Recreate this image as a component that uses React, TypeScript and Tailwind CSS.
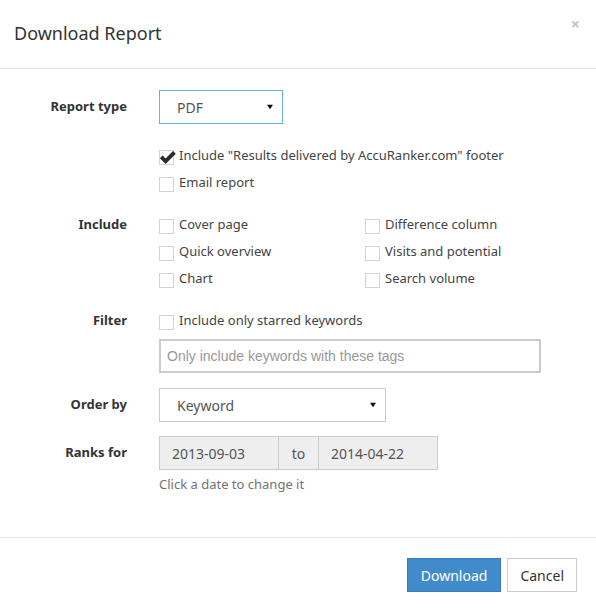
import React from "react";

const font = { fontFamily: '"Noto Sans", "Open Sans", sans-serif' };

function Box({ checked = false }: { checked?: boolean }) {
  return (
    <span className="relative inline-block w-[15px] h-[15px] border border-[#d4d4d4] bg-white shrink-0">
      {checked && (
        <svg
          viewBox="0 0 16 16"
          className="absolute left-[-1px] top-[-3px] w-[17px] h-[17px]"
        >
          <path
            d="M0.8 9.6 L3.4 7 L6.2 9.8 L13.2 2.8 L15.8 5.4 L6.2 15 Z"
            fill="#2b2b2b"
          />
        </svg>
      )}
    </span>
  );
}

function Check({ label, checked }: { label: string; checked?: boolean }) {
  return (
    <label className="flex items-center gap-[5px] h-[27px] text-[13px] text-[#444]">
      <Box checked={checked} />
      <span className="-mt-[4px]">{label}</span>
    </label>
  );
}

function Label({ children }: { children: React.ReactNode }) {
  return (
    <div className="w-[127px] shrink-0 text-right text-[13px] font-bold text-[#333]">
      {children}
    </div>
  );
}

function Arrow() {
  return (
    <svg viewBox="0 0 8 8" className="w-[6px] h-[6px]">
      <path d="M0 1 L8 1 L4 7 Z" fill="#111" />
    </svg>
  );
}

export default function App() {
  return (
    <div className="w-[596px] h-[610px] bg-white flex flex-col" style={font}>
      <div className="relative h-[69px] border-b border-[#e5e5e5] px-[14px] flex items-center">
        <h4 className="text-[18px] text-[#333] -mt-[2px]">Download Report</h4>
        <span className="absolute right-[16px] top-[12px] text-[16px] font-bold text-[#c4c4c4]">
          ×
        </span>
      </div>

      <div className="flex-1 flex flex-col pt-[21px]">
        <div className="flex items-center gap-[32px]">
          <Label>Report type</Label>
          <div className="w-[124px] h-[34px] border border-[#66afe9] flex items-center justify-between pl-[17px] pr-[9px] text-[14px] text-[#555]">
            PDF
            <Arrow />
          </div>
        </div>

        <div className="flex flex-col pl-[159px] mt-[20px]">
          <Check label={'Include "Results delivered by AccuRanker.com" footer'} checked />
          <Check label="Email report" />
        </div>

        <div className="flex items-start gap-[32px] mt-[15px]">
          <div className="h-[27px] flex items-center">
            <Label>
              <span className="block -mt-[4px]">Include</span>
            </Label>
          </div>
          <div className="grid grid-cols-[206px_206px]">
            <Check label="Cover page" />
            <Check label="Difference column" />
            <Check label="Quick overview" />
            <Check label="Visits and potential" />
            <Check label="Chart" />
            <Check label="Search volume" />
          </div>
        </div>

        <div className="flex items-start gap-[32px] mt-[15px]">
          <div className="h-[27px] flex items-center">
            <Label>
              <span className="block -mt-[4px]">Filter</span>
            </Label>
          </div>
          <div className="flex flex-col">
            <Check label="Include only starred keywords" />
            <div
              className="mt-[3px] w-[382px] h-[34px] border-2 border-[#ccc] flex items-center px-[6px] text-[14px] text-[#999]"
              style={{ fontFamily: '"Liberation Sans", Arial, sans-serif' }}
            >
              Only include keywords with these tags
            </div>
          </div>
        </div>

        <div className="flex items-center gap-[32px] mt-[15px]">
          <Label>Order by</Label>
          <div className="w-[227px] h-[34px] border border-[#ccc] flex items-center justify-between pl-[17px] pr-[9px] text-[14px] text-[#555]">
            Keyword
            <Arrow />
          </div>
        </div>

        <div className="flex items-center gap-[32px] mt-[14px]">
          <Label>Ranks for</Label>
          <div className="flex h-[34px] text-[14px] text-[#555]">
            <div className="w-[120px] bg-[#eee] border border-[#ccc] flex items-center pl-[12px]">
              2013-09-03
            </div>
            <div className="w-[40px] bg-[#eee] border-y border-[#ccc] border-r flex items-center justify-center">
              to
            </div>
            <div className="w-[119px] bg-[#eee] border border-[#ccc] border-l-0 flex items-center pl-[12px]">
              2014-04-22
            </div>
          </div>
        </div>

        <div className="pl-[159px] mt-[5px] text-[13px] text-[#737373]">
          Click a date to change it
        </div>
      </div>

      <div className="h-[73px] border-t border-[#e5e5e5] flex items-start justify-end gap-[6px] pt-[20px] pr-[19px]">
        <button className="h-[34px] px-[13px] bg-[#428bca] border border-[#357ebd] text-white text-[14px]">
          Download
        </button>
        <button className="h-[34px] px-[12px] bg-white border border-[#ccc] text-[#333] text-[14px]">
          Cancel
        </button>
      </div>
    </div>
  );
}
